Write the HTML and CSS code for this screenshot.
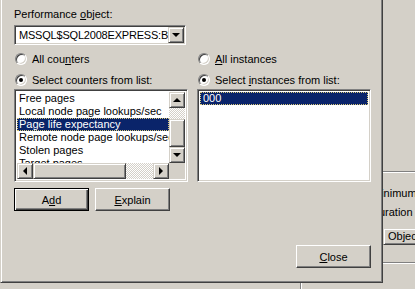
FILE: index.html
```html
<!DOCTYPE html>
<html lang="en">
<head>
    <meta charset="UTF-8">
    <meta name="viewport" content="width=device-width, initial-scale=1.0">
    <title>Add Counters</title>
    <link rel="stylesheet" href="styles.css">
</head>
<body>
    <div class="screen">
        <div class="dialog">
            <div class="field-label">Performance <u>o</u>bject:</div>
            <div class="combo">
                <span class="combo-text">MSSQL$SQL2008EXPRESS:Buffer Node</span>
                <span class="btn-face arrow-btn"><i class="tri tri-down"></i></span>
            </div>

            <div class="columns">
                <div class="col">
                    <div class="radio-row"><span class="radio"></span><span>All cou<u>n</u>ters</span></div>
                    <div class="radio-row"><span class="radio checked"></span><span>Select counters from list:</span></div>
                    <div class="listbox counters">
                        <div class="items">
                            <div class="item">Free pages</div>
                            <div class="item">Local node page lookups/sec</div>
                            <div class="item selected">Page life expectancy</div>
                            <div class="item">Remote node page lookups/sec</div>
                            <div class="item">Stolen pages</div>
                            <div class="item">Target pages</div>
                            <div class="item">Total pages</div>
                        </div>
                        <div class="vscroll">
                            <span class="btn-face sb-btn"><i class="tri tri-up"></i></span>
                            <span class="track track-top"></span>
                            <span class="btn-face thumb-v"></span>
                            <span class="btn-face sb-btn"><i class="tri tri-down"></i></span>
                        </div>
                        <div class="hscroll">
                            <span class="btn-face sb-btn"><i class="tri tri-left"></i></span>
                            <span class="btn-face thumb-h"></span>
                            <span class="track track-right"></span>
                            <span class="btn-face sb-btn"><i class="tri tri-right"></i></span>
                        </div>
                        <div class="corner"></div>
                    </div>
                    <div class="btn-row">
                        <button class="btn default">A<u>d</u>d</button>
                        <button class="btn"><u>E</u>xplain</button>
                    </div>
                </div>

                <div class="col">
                    <div class="radio-row"><span class="radio"></span><span><u>A</u>ll instances</span></div>
                    <div class="radio-row"><span class="radio checked"></span><span>Select <u>i</u>nstances from list:</span></div>
                    <div class="listbox instances">
                        <div class="item selected">000</div>
                    </div>
                </div>
            </div>

            <div class="footer">
                <button class="btn"><u>C</u>lose</button>
            </div>
        </div>

        <div class="behind">
            <div class="pane-line"></div>
            <div class="clip-text minimum">Minimum</div>
            <div class="clip-text duration">Duration</div>
            <div class="btn-face object-btn">Object...</div>
            <div class="pane-line low"></div>
        </div>
    </div>
    <div class="under"><span class="mark"></span></div>
</body>
</html>
```

FILE: styles.css
```css
body {
    margin: 0;
    width: 415px;
    height: 289px;
    overflow: hidden;
    background-color: #d4d0c8;
    font-family: "Liberation Sans", Arial, sans-serif;
    font-size: 11px;
    color: #000;
}

u {
    text-decoration-thickness: 1px;
    text-underline-offset: 1px;
}

.screen {
    display: flex;
    height: 283px;
}

/* the dialog */

.dialog {
    width: 383px;
    height: 283px;
    box-sizing: border-box;
    padding: 8px 11px 0 13px;
    border-left: 1px solid #d4d0c8;
    border-right: 1px solid #404040;
    border-bottom: 1px solid #404040;
    box-shadow: inset 1px 0 #fff, inset -1px -1px #808080;
    display: flex;
    flex-direction: column;
}

.field-label {
    height: 13px;
    line-height: 13px;
}

/* classic 3d edges */

.btn-face {
    box-sizing: border-box;
    background-color: #d4d0c8;
    border: 1px solid;
    border-color: #d4d0c8 #404040 #404040 #d4d0c8;
    box-shadow: inset 1px 1px #fff, inset -1px -1px #808080;
}

.combo,
.listbox {
    box-sizing: border-box;
    background: #fff;
    border: 1px solid;
    border-color: #808080 #fff #fff #808080;
    box-shadow: inset 1px 1px #404040, inset -1px -1px #d4d0c8;
    padding: 1px;
}

.combo {
    margin-top: 4px;
    width: 172px;
    height: 20px;
    display: flex;
}

.combo-text {
    flex: 1;
    overflow: hidden;
    white-space: nowrap;
    padding-left: 3px;
    line-height: 16px;
    letter-spacing: -0.2px;
}

.arrow-btn {
    width: 16px;
    height: 16px;
    display: flex;
    align-items: center;
    justify-content: center;
}

.tri {
    width: 0;
    height: 0;
    border-style: solid;
    border-color: transparent;
}

.tri-down {
    border-width: 4px 4px 0 4px;
    border-top-color: #000;
}

.tri-up {
    border-width: 0 4px 4px 4px;
    border-bottom-color: #000;
}

.tri-left {
    border-width: 4px 4px 4px 0;
    border-right-color: #000;
}

.tri-right {
    border-width: 4px 0 4px 4px;
    border-left-color: #000;
}

/* radio groups */

.columns {
    display: flex;
    gap: 9px;
    margin-top: 7px;
}

.col {
    width: 174px;
    display: flex;
    flex-direction: column;
}

.radio-row {
    display: flex;
    align-items: center;
    height: 13px;
    white-space: nowrap;
}

.radio-row + .radio-row {
    margin-top: 8px;
}

.radio {
    position: relative;
    width: 12px;
    height: 12px;
    box-sizing: border-box;
    margin: 0 5px 0 1px;
    border-radius: 50%;
    background: #fff;
    border: 1px solid;
    border-color: #808080 #fff #fff #808080;
    box-shadow: inset 1px 1px #404040, inset -1px -1px #d4d0c8;
}

.radio.checked::after {
    content: "";
    position: absolute;
    left: 3px;
    top: 3px;
    width: 4px;
    height: 4px;
    border-radius: 50%;
    background: #000;
}

/* lists */

.listbox {
    margin-top: 3px;
    height: 93px;
    padding: 2px;
    overflow: hidden;
}

.counters {
    display: grid;
    grid-template-columns: 1fr 16px;
    grid-template-rows: 1fr 16px;
}

.items {
    overflow: hidden;
}

.item {
    height: 13px;
    line-height: 13px;
    padding-left: 2px;
    white-space: nowrap;
}

.instances .item {
    padding-left: 3px;
}

.item.selected {
    background-color: #0a246a;
    color: #fff;
    outline: 1px dotted #d8c878;
    outline-offset: -1px;
}

.vscroll {
    display: flex;
    flex-direction: column;
}

.hscroll {
    display: flex;
}

.sb-btn {
    width: 16px;
    height: 16px;
    flex: none;
    display: flex;
    align-items: center;
    justify-content: center;
}

.track {
    background: repeating-conic-gradient(#fff 0 25%, #d4d0c8 0 50%) 0 0 / 2px 2px;
}

.track-top {
    height: 11px;
}

.thumb-v {
    flex: 1;
}

.thumb-h {
    width: 93px;
}

.track-right {
    flex: 1;
}

.corner {
    background: #d4d0c8;
}

/* buttons */

.btn-row {
    display: flex;
    gap: 6px;
    margin-top: 6px;
}

.btn {
    width: 75px;
    height: 23px;
    box-sizing: border-box;
    padding: 0;
    font: inherit;
    color: #000;
    background-color: #d4d0c8;
    border: 1px solid;
    border-color: #fff #404040 #404040 #fff;
    box-shadow: inset -1px -1px #808080;
}

.btn.default {
    border-color: #000;
    box-shadow: inset 1px 1px #fff, inset -1px -1px #404040, inset -2px -2px #808080;
}

.footer {
    display: flex;
    justify-content: flex-end;
    margin-top: 34px;
}

/* window behind the dialog */

.behind {
    flex: 1;
    display: flex;
    flex-direction: column;
    overflow: hidden;
    white-space: nowrap;
}

.pane-line {
    margin-top: 171px;
    height: 1px;
    border-bottom: 1px solid #fff;
    background: #808080;
}

.clip-text {
    height: 13px;
    line-height: 13px;
}

.minimum {
    margin: 14px 0 0 -11px;
}

.duration {
    margin: 6px 0 0 -12px;
}

.object-btn {
    margin-top: 9px;
    height: 17px;
    width: 60px;
    line-height: 14px;
    padding-left: 4px;
}

.pane-line.low {
    margin-top: 17px;
}

.under {
    height: 6px;
    position: relative;
}

.under .mark {
    position: absolute;
    left: 300px;
    top: 0;
    width: 1px;
    height: 6px;
    background: #808080;
    box-shadow: 1px 0 #fff;
}
```
